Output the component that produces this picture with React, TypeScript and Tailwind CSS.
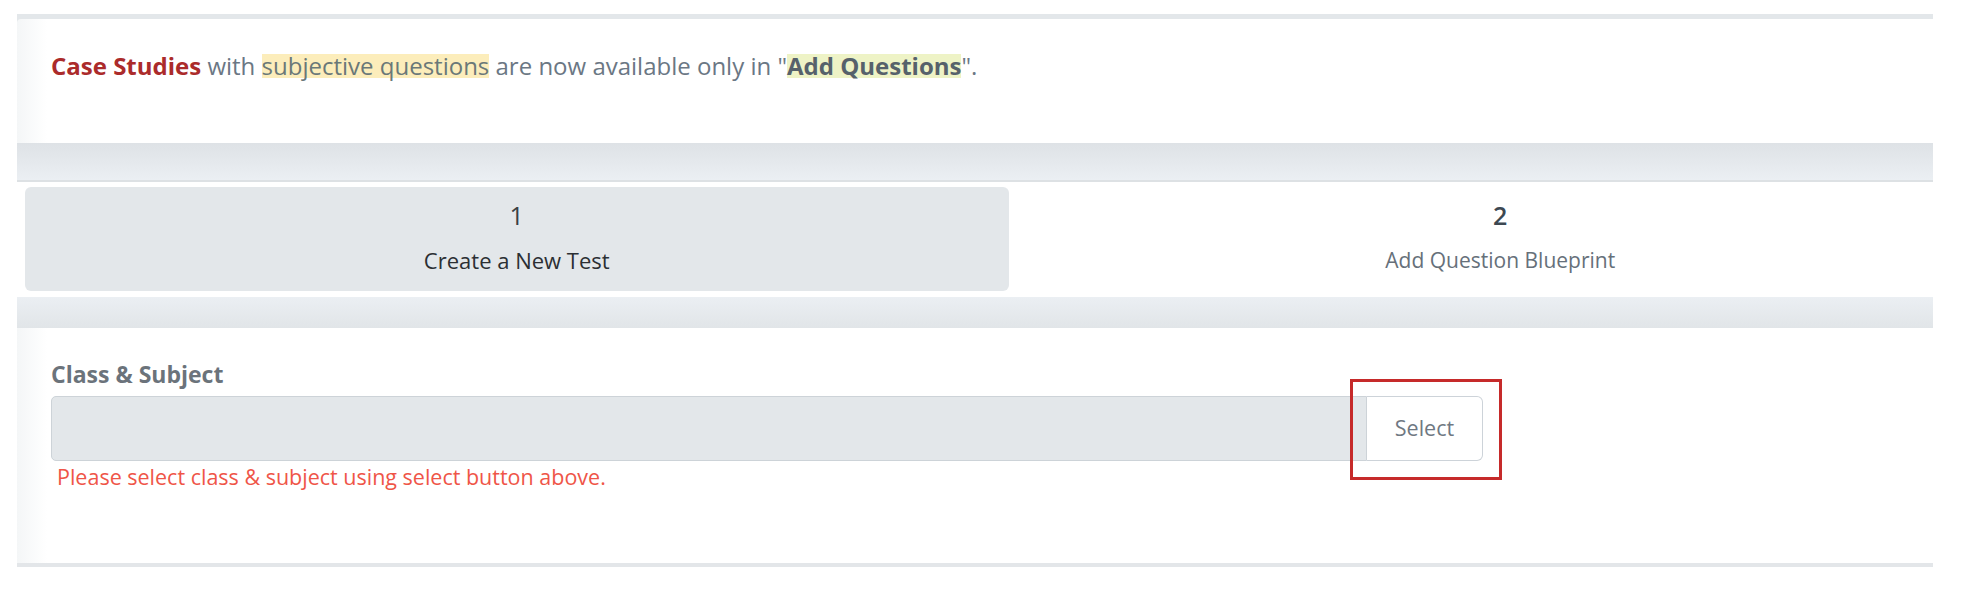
import React from 'react';

const font = { fontFamily: '"Open Sans", "Liberation Sans", sans-serif' };

const Step: React.FC<{ n: number; label: string; active?: boolean }> = ({ n, label, active }) => (
  <div
    className={`flex-1 flex flex-col items-center rounded-[6px] pt-[16px] ${
      active ? 'bg-[#e3e7ea]' : 'bg-white'
    }`}
  >
    <span
      className={`h-[24px] leading-[24px] text-[25px] ${
        active ? 'text-[#3a3f44] font-medium' : 'text-[#3d4852] font-semibold'
      }`}
    >
      {n}
    </span>
    <span
      className={`mt-[21px] leading-[24px] ${
        active ? 'text-[22px] text-[#2b2f33] font-medium' : 'text-[21px] text-[#66707a]'
      }`}
    >
      {label}
    </span>
  </div>
);

export default function App() {
  return (
    <div className="min-h-screen bg-white pt-[14px]" style={font}>
      <div className="ml-[17px] w-[1916px] overflow-hidden bg-[#e3e7ea]">
        <div className="w-[1983px] pt-[5px]">
          {/* Notice */}
          <div className="h-[124px] rounded-t-[4px] bg-[linear-gradient(to_right,#f4f6f7,#ffffff_30px)] pl-[34px] pt-[35px]">
            <p className="text-[24px] leading-[24px] text-[#6b7784]">
              <span className="font-bold text-[#ab2b2b]">Case Studies</span> with{' '}
              <span className="inline-block leading-[24px] bg-[#fcedbb] text-[#6a7878]">subjective questions</span> are now available only in "
              <span className="inline-block leading-[24px] bg-[#eef3c6] font-bold text-[#56616b]">Add Questions</span>".
            </p>
          </div>

          <div className="h-[37px] bg-[linear-gradient(to_bottom,#dee2e6,#ebeff3)]" />

          {/* Stepper */}
          <div className="h-[117px] border-t-2 border-[#dde1e4] bg-white px-[8px] pt-[5px] pb-[6px] flex">
            <Step n={1} label="Create a New Test" active />
            <Step n={2} label="Add Question Blueprint" />
          </div>

          <div className="h-[31px] bg-[linear-gradient(to_bottom,#ebeff3,#e1e5e8)]" />

          {/* Class & Subject */}
          <div className="h-[235px] bg-[linear-gradient(to_right,#f4f6f7,#ffffff_30px)] pl-[34px] pt-[34px]">
            <label className="block text-[23px] leading-[24px] font-bold text-[#6b737b]">Class &amp; Subject</label>
            <div className="relative mt-[10px] flex w-[1432px] h-[65px]">
              <div className="flex-1 rounded-l-[5px] border border-[#cdd3d8] bg-[#e3e7ea]" />
              <button className="w-[116px] rounded-r-[6px] border border-l-0 border-[#cdd3d9] bg-white text-[21.5px] text-[#6f7882]">
                Select
              </button>
              <div className="absolute left-[1299px] top-[-17px] w-[152px] h-[101px] border-[3px] border-[#c62a2a]" />
            </div>
            <p className="mt-[5px] ml-[6px] text-[21.5px] leading-[22px] text-[#ef5548]">
              Please select class &amp; subject using select button above.
            </p>
          </div>

          <div className="h-[4px] bg-[#e3e6e9]" />
        </div>
      </div>
    </div>
  );
}
